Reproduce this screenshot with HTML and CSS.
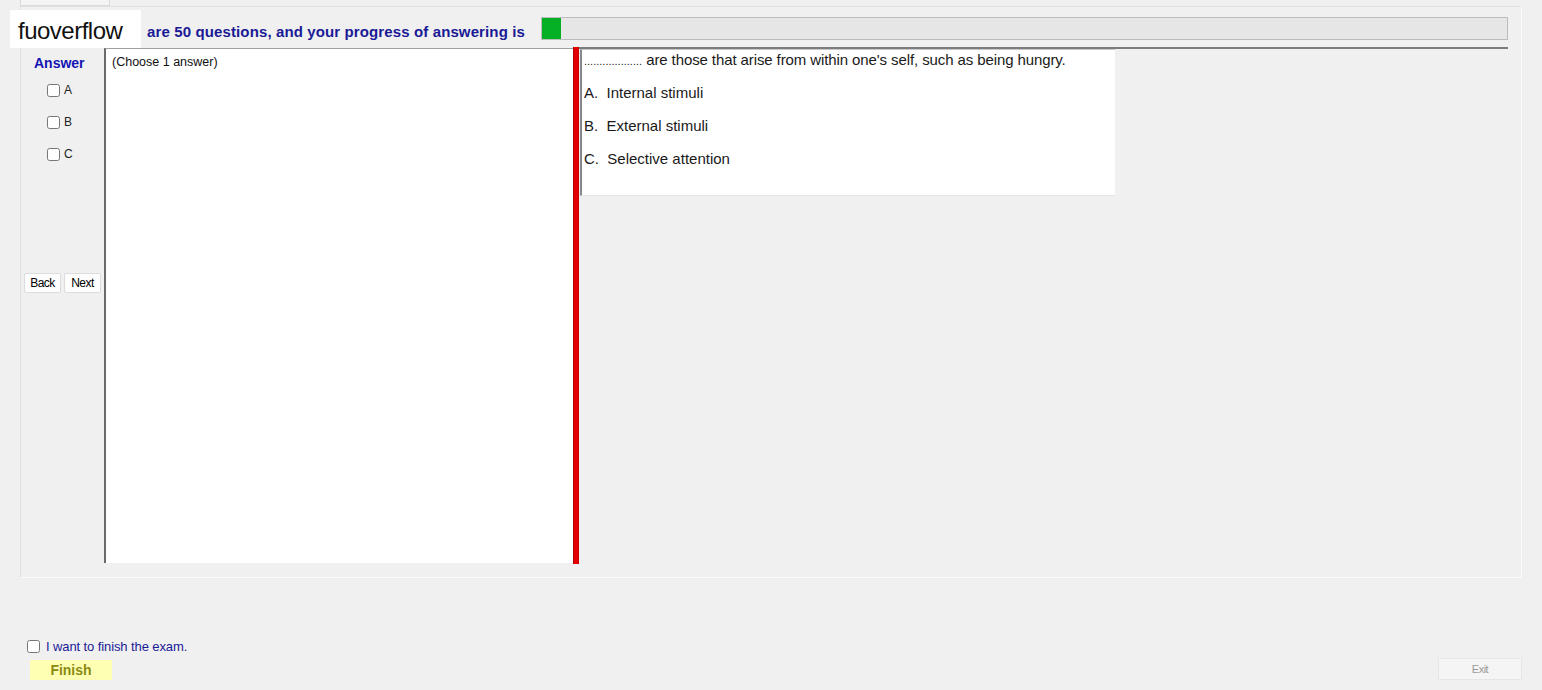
FILE: index.html
```html
<!DOCTYPE html>
<html lang="en">
<head>
    <meta charset="UTF-8">
    <title>Exam</title>
    <link rel="stylesheet" href="styles.css">
</head>
<body>
    <div class="tab"></div>
    <div class="frame">
        <div class="header">
            <span class="count">are 50 questions, and your progress of answering is</span>
            <div class="progress"><div class="progress-fill"></div></div>
        </div>
        <div class="content">
            <div class="sidepanel">
                <p class="answer-title">Answer</p>
                <label class="opt"><input type="checkbox"> A</label>
                <label class="opt"><input type="checkbox"> B</label>
                <label class="opt"><input type="checkbox"> C</label>
                <div class="nav">
                    <button class="small-btn">Back</button>
                    <button class="small-btn">Next</button>
                </div>
            </div>
            <div class="answer-box">(Choose 1 answer)</div>
            <div class="splitter"></div>
            <div class="right-area">
                <div class="question">
                    <p class="q-text"><span class="dots">...................</span> are those that arise from within one's self, such as being hungry.</p>
                    <p class="q-choice">A.&nbsp; Internal stimuli</p>
                    <p class="q-choice">B.&nbsp; External stimuli</p>
                    <p class="q-choice">C.&nbsp; Selective attention</p>
                </div>
            </div>
        </div>
    </div>
    <div class="footer">
        <div class="footer-left">
            <label class="finish-check"><input type="checkbox"> I want to finish the exam.</label>
            <button class="finish">Finish</button>
        </div>
        <button class="exit">Exit</button>
    </div>
    <div class="brand">fuoverflow</div>
</body>
</html>
```

FILE: styles.css
```css
body{
    margin: 0;
    width: 1542px;
    height: 690px;
    background-color: #f0f0f0;
    font-family: "Liberation Sans", Arial, sans-serif;
    position: relative;
    overflow: hidden;
}

.tab{
    margin-left: 20px;
    width: 88px;
    height: 5px;
    background-color: #f4f4f4;
    border: 1px solid #dadada;
    border-top: none;
}

.frame{
    margin-left: 20px;
    width: 1502px;
    height: 572px;
    border: 1px solid #e0e0e0;
    border-right-color: #fafafa;
    border-bottom-color: #fafafa;
    box-sizing: border-box;
    padding: 10px 13px 0 2px;
}

.header{
    display: flex;
    align-items: center;
    height: 23px;
}
.count{
    width: 503px;
    text-align: right;
    color: #1a1a96;
    font-weight: bold;
    font-size: 15px;
    letter-spacing: 0.12px;
    padding-top: 6px;
}
.progress{
    margin-left: 16px;
    width: 969px;
    height: 23px;
    box-sizing: border-box;
    background-color: #e6e6e6;
    border: 1px solid #bcbcbc;
}
.progress-fill{
    width: 19px;
    height: 21px;
    background-color: #06b025;
}

.content{
    display: flex;
    margin-top: 7px;
    height: 516px;
}

.sidepanel{
    width: 81px;
    display: flex;
    flex-direction: column;
    align-items: flex-start;
}
.answer-title{
    margin: 8px 0 8px 11px;
    font-size: 14px;
    font-weight: bold;
    color: #1414b4;
}
.opt{
    display: flex;
    align-items: center;
    gap: 1px;
    height: 32px;
    margin: -5px 0 5px 24px;
    font-size: 12px;
    color: #222;
}
.opt input{
    width: 13px;
    height: 13px;
    margin: 0 3px 0 0;
}
.nav{
    display: flex;
    gap: 3px;
    margin-top: 98px;
    margin-left: 1px;
}
.small-btn{
    font-family: "Liberation Sans", Arial, sans-serif;
    font-size: 12px;
    letter-spacing: -0.5px;
    width: 37px;
    height: 20px;
    padding: 0;
    background-color: #fdfdfd;
    border: 1px solid #dcdcdc;
    border-radius: 2px;
}

.answer-box{
    width: 469px;
    box-sizing: border-box;
    background-color: #fff;
    border-left: 2px solid #6a6a6a;
    border-top: 1px solid #a0a0a0;
    font-size: 12.5px;
    padding: 6px 0 0 6px;
    margin-top: 1px;
    color: #111;
}

.splitter{
    width: 6px;
    height: 517px;
    background-color: #e40000;
    border-left: 1px solid #b00000;
    border-right: 1px solid #c80000;
    box-sizing: border-box;
}

.right-area{
    flex: 1;
    border-top: 2px solid #7c7c7c;
    padding-left: 1px;
}
.question{
    width: 535px;
    height: 147px;
    box-sizing: border-box;
    background-color: #fff;
    border-left: 2px solid #888;
    border-top: 1px solid #c8c8c8;
    border-bottom: 1px solid #e6e6e6;
    padding: 1px 0 0 2px;
    font-size: 15px;
    color: #1a1a1a;
}
.q-text{
    margin: 0;
    height: 33px;
    line-height: 18px;
    letter-spacing: -0.1px;
}
.dots{
    font-size: 11px;
    letter-spacing: 0;
}
.q-choice{
    margin: 0;
    height: 33px;
    line-height: 18px;
}

.footer{
    display: flex;
    justify-content: space-between;
    align-items: flex-end;
    padding: 61px 20px 0 26px;
}
.footer-left{
    display: flex;
    flex-direction: column;
}
.finish-check{
    display: flex;
    align-items: center;
    font-size: 13px;
    color: #1a1a96;
    letter-spacing: -0.1px;
}
.finish-check input{
    width: 13px;
    height: 13px;
    margin: 0 6px 0 1px;
}
.finish{
    margin: 6px 0 0 4px;
    width: 82px;
    height: 20px;
    background-color: #ffffb4;
    border: none;
    font-family: "Liberation Sans", Arial, sans-serif;
    font-weight: bold;
    font-size: 14px;
    color: #8a8a10;
}
.exit{
    width: 84px;
    height: 22px;
    background-color: #f5f5f5;
    border: 1px solid #e6e6e6;
    font-family: "Liberation Sans", Arial, sans-serif;
    font-size: 11px;
    color: #9a9a9a;
    letter-spacing: -0.5px;
}

.brand{
    position: absolute;
    left: 10px;
    top: 10px;
    width: 131px;
    height: 38px;
    box-sizing: border-box;
    padding: 8px 0 0 8px;
    background-color: #fff;
    font-size: 24px;
    color: #111;
    letter-spacing: -0.5px;
    line-height: 26px;
}
```
